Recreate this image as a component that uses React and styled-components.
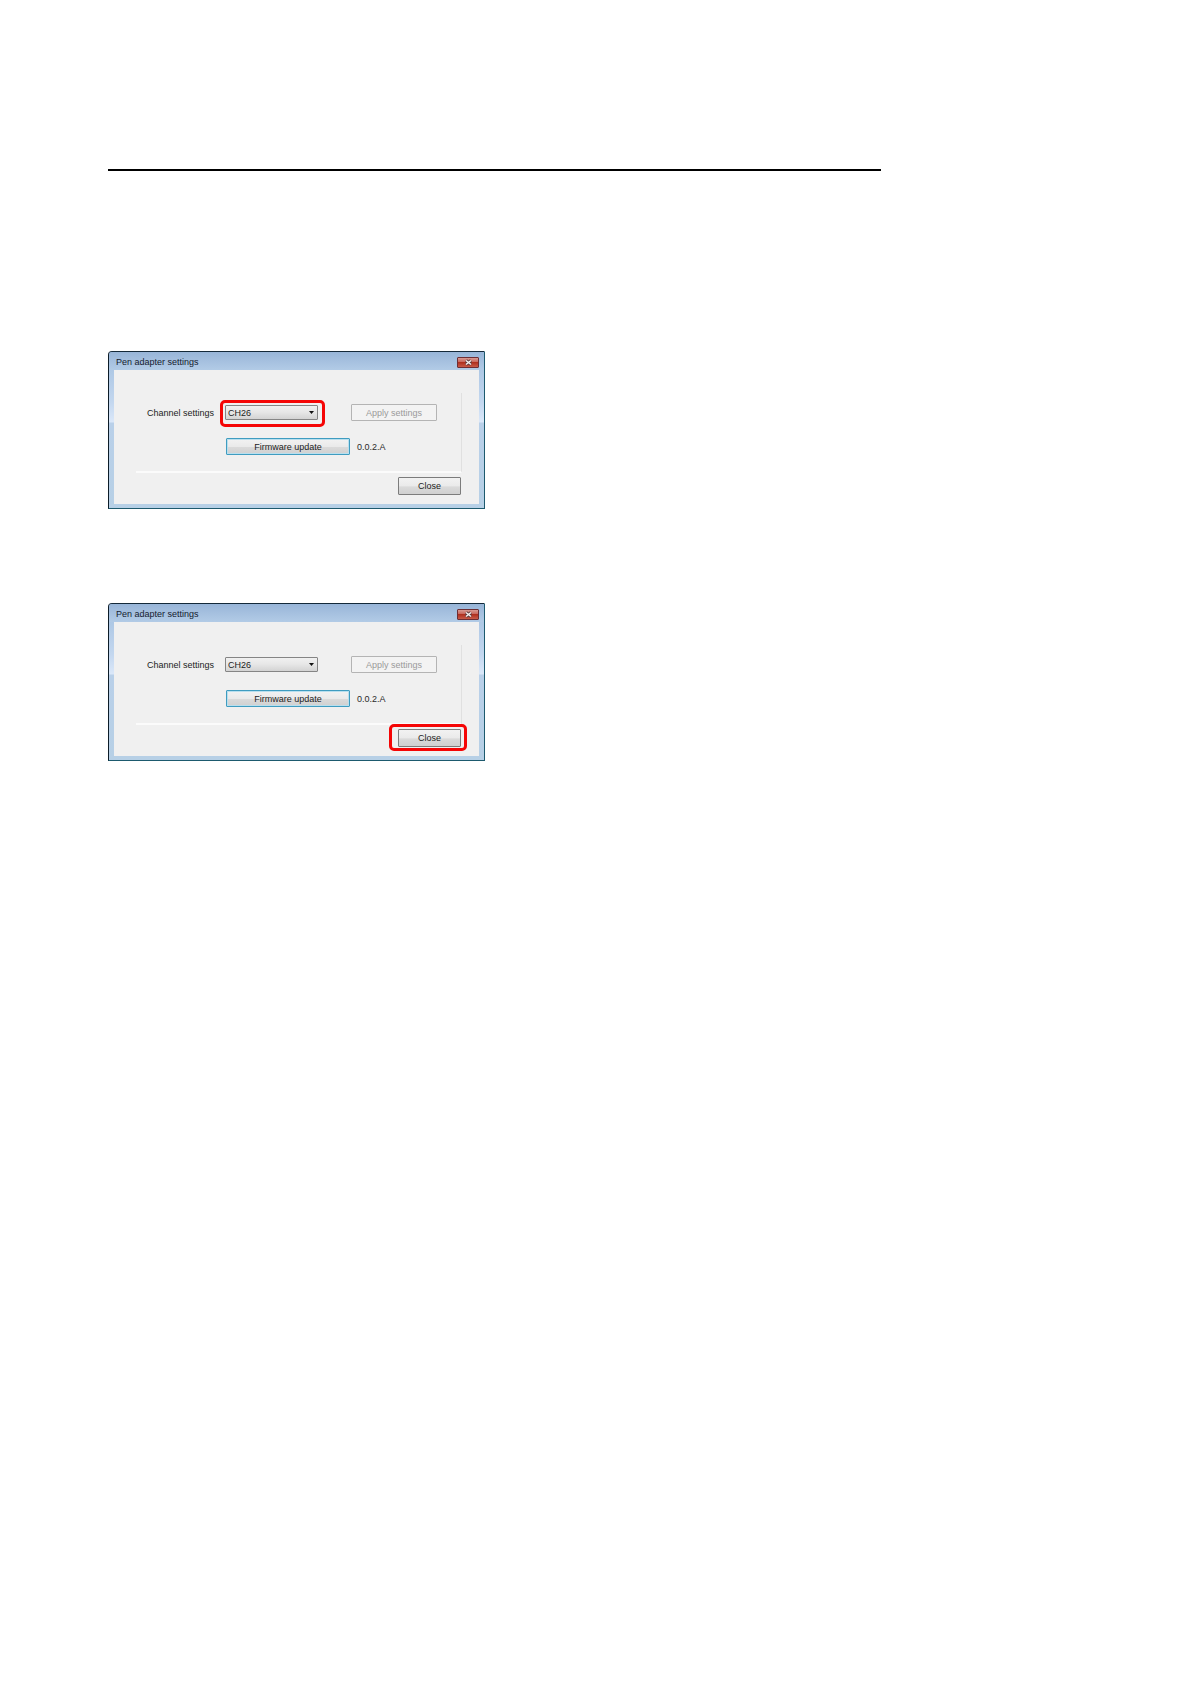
import styled, { createGlobalStyle } from "styled-components";
import { useId } from "react";

export default function App() {
  return (
    <>
      <GlobalStyle />
      <Page>
        <Rule />
        <Windows>
          <SettingsWindow highlight="channel" />
          <SettingsWindow highlight="close" />
        </Windows>
      </Page>
    </>
  );
}

function SettingsWindow({ highlight }) {
  const id = useId();
  return (
    <Window aria-labelledby={`${id}-title`}>
      <TitleBar>
        <Title id={`${id}-title`}>Pen adapter settings</Title>
        <CloseIconButton type="button" aria-label="Close window">
          <CloseIcon />
        </CloseIconButton>
      </TitleBar>
      <Body>
        <Group>
          <Row>
            <Label htmlFor={`${id}-channel`}>Channel settings</Label>
            <SelectBox>
              <Select id={`${id}-channel`} defaultValue="CH26">
                <option>CH26</option>
              </Select>
              <Arrow viewBox="0 0 5 3" aria-hidden="true">
                <path d="M0 0h5L2.5 3z" fill="#111" />
              </Arrow>
              {highlight === "channel" && <ChannelMark />}
            </SelectBox>
            <ApplyButton type="button" disabled>
              Apply settings
            </ApplyButton>
          </Row>
          <FirmwareRow>
            <FirmwareButton type="button">Firmware update</FirmwareButton>
            <Version>0.0.2.A</Version>
          </FirmwareRow>
        </Group>
        <Footer>
          <ButtonBox>
            <CloseButton type="button">Close</CloseButton>
            {highlight === "close" && <CloseMark />}
          </ButtonBox>
        </Footer>
      </Body>
    </Window>
  );
}

function CloseIcon() {
  return (
    <svg width="9" height="7" viewBox="0 0 9 7" aria-hidden="true">
      <path d="M2 1.5l5 4M7 1.5l-5 4" stroke="#5b3a3c" strokeWidth="3.2" />
      <path d="M2 1.5l5 4M7 1.5l-5 4" stroke="#f6efef" strokeWidth="1.6" />
    </svg>
  );
}

const GlobalStyle = createGlobalStyle`
  * {
    box-sizing: border-box;
  }

  body {
    margin: 0;
    background: #fff;
    font-family: "Liberation Sans", Arial, sans-serif;
    font-size: 9px;
    line-height: 12px;
    color: #1c1c1c;
  }

  button,
  select {
    font: inherit;
    color: inherit;
  }
`;

const Page = styled.main`
  padding: 169px 108px;
`;

const Rule = styled.hr`
  max-width: 773px;
  height: 2px;
  margin: 0;
  border: 0;
  background: #000;
`;

const Windows = styled.div`
  display: flex;
  flex-direction: column;
  gap: 94px;
  margin-top: 180px;
`;

const Window = styled.section`
  max-width: 377px;
  padding: 0 5px 4px;
  border: 1px solid #1d5a6e;
  border-top-color: #14293a;
  border-left-color: #0c1c28;
  border-radius: 4px 1px 0 0;
  background: linear-gradient(
    #9dbadb 0,
    #aec8e5 18px,
    #c3d7ef 50px,
    #dbe8f9 70px,
    #b9d0e9 71px,
    #b7d0e6 100%
  );
`;

const TitleBar = styled.header`
  display: flex;
  align-items: center;
  justify-content: space-between;
  height: 18px;
  margin: 0 -5px;
  padding: 2px 5px 0 7px;
  border-radius: 3px 0 0 0;
  background: linear-gradient(#98b5d8, #b2cbe6);
`;

const Title = styled.h2`
  margin: 0;
  font-size: 9px;
  font-weight: normal;
  color: #14202e;
`;

const CloseIconButton = styled.button`
  display: flex;
  align-items: center;
  justify-content: center;
  width: 22px;
  height: 11px;
  padding: 0;
  border: 1px solid #6d2e35;
  border-radius: 1px;
  background: linear-gradient(#d99a93, #c9655a 45%, #b0301f 50%, #c85a48);
`;

const Body = styled.div`
  padding: 23px 17px 9px 22px;
  background: #f0f0f0;
`;

const Group = styled.div`
  display: flex;
  flex-direction: column;
  gap: 17px;
  padding: 11px 0 16px 11px;
  border-right: 1px solid #e0e0e0;
  border-bottom: 2px solid #fbfbfb;
`;

const Row = styled.div`
  display: flex;
  align-items: center;
  height: 17px;
`;

const FirmwareRow = styled(Row)`
  gap: 7px;
  padding-left: 79px;
`;

const Label = styled.label`
  width: 78px;
`;

const SelectBox = styled.div`
  position: relative;
  width: 93px;
  margin-right: 33px;
`;

const Select = styled.select`
  display: block;
  width: 100%;
  height: 15px;
  padding: 0 2px;
  border: 1px solid #858585;
  border-radius: 1px;
  background: linear-gradient(#f1f1f1, #e6e6e6 50%, #d3d3d3);
  appearance: none;
`;

const Arrow = styled.svg`
  position: absolute;
  top: 6px;
  right: 4px;
  width: 5px;
  height: 3px;
  pointer-events: none;
`;

const Button = styled.button`
  height: 17px;
  padding: 0;
  border: 1px solid #7c7c7c;
  border-radius: 1px;
  background: linear-gradient(#f2f2f2, #eaeaea 50%, #dadada 55%, #d0d0d0);
`;

const ApplyButton = styled(Button)`
  width: 86px;
  border-color: #b4b4b4;
  background: #f3f3f3;
  color: #9a9a9a;
`;

const FirmwareButton = styled(Button)`
  width: 124px;
  border-color: #3f9cc0;
  box-shadow: inset 0 0 0 1px #b9dfee;
`;

const Version = styled.span`
  color: #2a2a2a;
`;

const Footer = styled.footer`
  display: flex;
  justify-content: flex-end;
  padding: 4px 1px 0 0;
`;

const ButtonBox = styled.div`
  position: relative;
`;

const CloseButton = styled(Button)`
  display: block;
  width: 63px;
  height: 18px;
`;

const Mark = styled.span`
  position: absolute;
  border: 3px solid #f50505;
  border-radius: 5px;
  pointer-events: none;
`;

const ChannelMark = styled(Mark)`
  inset: -5px -7px -7px -5px;
`;

const CloseMark = styled(Mark)`
  inset: -5px -6px -4px -9px;
`;
